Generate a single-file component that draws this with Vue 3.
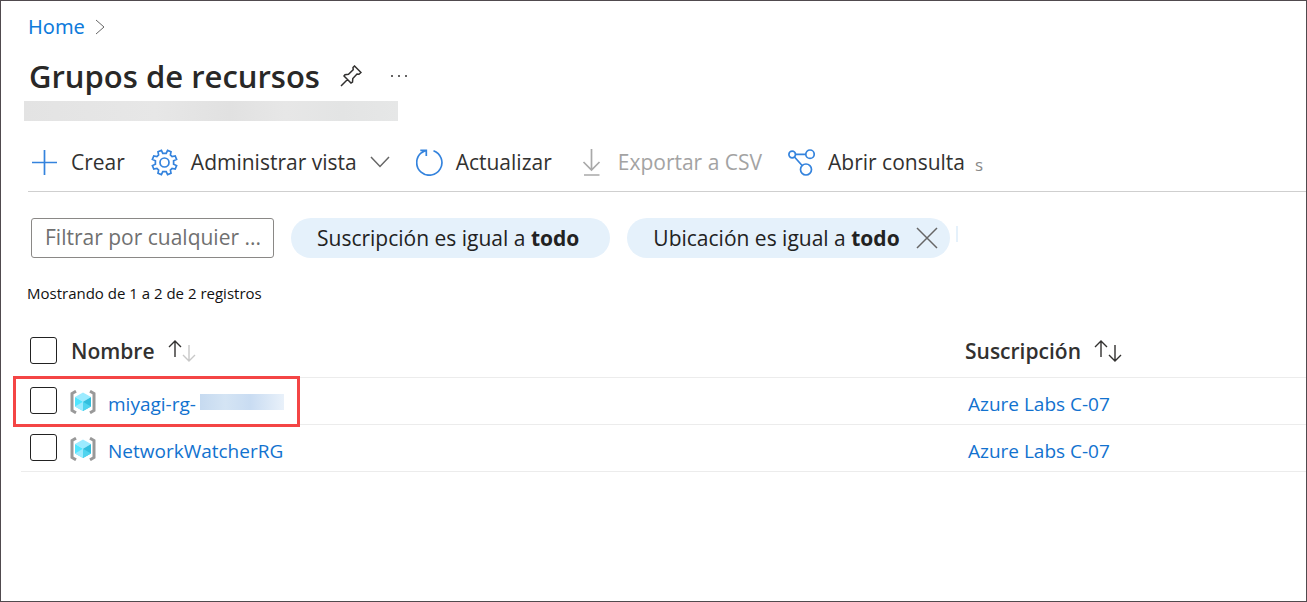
<script setup>
import { ref } from 'vue'

const filterText = ref('')
const allSelected = ref(false)
const rows = ref([
  { id: 'miyagi', name: 'miyagi-rg-', masked: true, subscription: 'Azure Labs C-07', selected: false },
  { id: 'watcher', name: 'NetworkWatcherRG', masked: false, subscription: 'Azure Labs C-07', selected: false },
])

function toggleAll() {
  rows.value.forEach((row) => { row.selected = allSelected.value })
}
</script>

<template>
  <main class="page">
    <nav class="breadcrumb" aria-label="Breadcrumb">
      <a href="#">Home</a>
      <svg class="crumb-arrow" viewBox="0 0 10 16" aria-hidden="true"><path d="M1 1l8 7-8 7" /></svg>
    </nav>

    <header class="title-row">
      <h1>Grupos de recursos</h1>
      <button class="plain" type="button" aria-label="Anclar">
        <svg class="pin" viewBox="0 0 22 22" aria-hidden="true">
          <path d="M1 21l6.500-6.500M4 11l7 7 1.500-1 .3-3.500 4.200-4.500 2 .3 2-1.800L14.500 1l-1.500 1.500.2 2.200L8.500 9.300 5 9.700z" />
        </svg>
      </button>
      <button class="plain" type="button" aria-label="Más opciones">
        <svg class="dots" viewBox="0 0 18 4" aria-hidden="true">
          <circle cx="2" cy="2" r="1" /><circle cx="9" cy="2" r="1" /><circle cx="16" cy="2" r="1" />
        </svg>
      </button>
    </header>
    <div class="masked-directory"></div>

    <div class="toolbar" role="toolbar">
      <button class="command" type="button">
        <svg class="icon" viewBox="0 0 27 27" aria-hidden="true"><path d="M13.500 1v25M1 13.500h25" /></svg>
        Crear
      </button>
      <button class="command" type="button">
        <svg class="icon" viewBox="0 0 27 27" aria-hidden="true">
          <path d="M11.800 4.400L10.400 1.400 7 2.800 7.600 5.900 5.900 7.600 2.800 7 1.400 10.400 4.400 11.800V15.200L1.400 16.600 2.800 20 5.900 19.400 7.600 21.100 7 24.200 10.400 25.600 11.800 22.600H15.200L16.600 25.600 20 24.200 19.400 21.100 21.100 19.400 24.200 20 25.600 16.600 22.600 15.200V11.800L25.600 10.400 24.200 7 21.100 7.600 19.400 5.900 20 2.800 16.600 1.400 15.200 4.400z" />
          <circle cx="13.500" cy="13.500" r="4.500" />
        </svg>
        Administrar vista
        <svg class="chevron" viewBox="0 0 20 12" aria-hidden="true"><path d="M1 1l9 9.500L19 1" /></svg>
      </button>
      <button class="command" type="button">
        <svg class="icon" viewBox="0 0 27 27" aria-hidden="true">
          <path d="M17.500 1.700a12.600 12.600 0 1 1-12 2l4.500-2.400M4.300 1.300h6v5.800" />
        </svg>
        Actualizar
      </button>
      <button class="command" type="button" disabled>
        <svg class="icon" viewBox="0 0 27 27" aria-hidden="true">
          <path d="M13.500 0v20M5.500 13l8 8 8-8M6 26h15.500" />
        </svg>
        Exportar a CSV
      </button>
      <button class="command" type="button">
        <svg class="icon" viewBox="0 0 27 27" aria-hidden="true">
          <circle cx="4.200" cy="5.500" r="3.300" /><circle cx="22" cy="5.200" r="4.200" /><circle cx="18" cy="20.500" r="5.500" />
          <path d="M7.500 5.400h10.300M6.500 8l7.600 8.500" />
        </svg>
        Abrir consulta
      </button>
      <span class="clipped-label">s</span>
    </div>

    <div class="filters">
      <input v-model="filterText" class="search" type="text" placeholder="Filtrar por cualquier ..." aria-label="Filtrar por cualquier campo">
      <button class="pill" type="button"><span>Suscripción es igual a <strong>todo</strong></span></button>
      <div class="pill closable">
        <span>Ubicación es igual a <strong>todo</strong></span>
        <button class="plain" type="button" aria-label="Quitar filtro">
          <svg class="close" viewBox="0 0 22 22" aria-hidden="true"><path d="M1 1l20 20M21 1L1 21" /></svg>
        </button>
      </div>
      <span class="pill-edge"></span>
    </div>

    <p class="count">Mostrando de 1 a 2 de 2 registros</p>

    <div class="grid">
      <table class="groups">
        <thead>
          <tr>
            <th class="check"><input v-model="allSelected" type="checkbox" aria-label="Seleccionar todo" @change="toggleAll"></th>
            <th class="name">
              <span class="heading">Nombre
                <svg class="sort" viewBox="0 0 28 22" aria-hidden="true">
                  <path d="M7 17V1M1 7l6-6 6 6" /><path class="faint" d="M21 5v16M15 15l6 6 6-6" />
                </svg>
              </span>
            </th>
            <th>
              <span class="heading">Suscripción
                <svg class="sort" viewBox="0 0 28 22" aria-hidden="true">
                  <path d="M7 17V1M1 7l6-6 6 6" /><path d="M21 5v16M15 15l6 6 6-6" />
                </svg>
              </span>
            </th>
          </tr>
        </thead>
        <tbody>
          <tr v-for="row in rows" :key="row.id">
            <td class="check" :class="{ marked: row.masked }">
              <input v-model="row.selected" type="checkbox" :aria-label="'Seleccionar ' + row.name">
            </td>
            <td>
              <span class="resource">
                <svg class="group-icon" viewBox="0 0 26 24" aria-hidden="true">
                  <path class="bracket" d="M6 1.200L2 3.500v17l4 2.300M20 1.200l4 2.300v17l-4 2.300" />
                  <path fill="#9cebff" d="M13 2.500l8 4.600-8 4.600-8-4.600z" />
                  <path fill="#50e6ff" d="M5 7.100l8 4.600V21l-8-4.600z" />
                  <path fill="#32bedd" d="M21 7.100l-8 4.600V21l8-4.600z" />
                  <path fill="#9cebff" d="M5 16.400l8-4.700V21z" />
                  <path fill="#50d4ef" d="M21 16.400l-8-4.700V21z" />
                </svg>
                <a href="#">{{ row.name }}</a><span v-if="row.masked" class="masked-name"></span>
              </span>
            </td>
            <td class="subscription"><a href="#">{{ row.subscription }}</a></td>
          </tr>
        </tbody>
      </table>
    </div>
  </main>
</template>

<style>
body { margin: 0; background: #fff; }
</style>

<style scoped>
.page {
  box-sizing: border-box;
  min-height: 100vh;
  border: 1px solid #504a4e;
  padding-top: 12px;
  background: #fff;
  color: #323130;
  font-family: "Open Sans", "Noto Sans", sans-serif;
  font-size: 21px;
  line-height: 28px;
}
button, input { font: inherit; color: inherit; margin: 0; }
button { border: 0; padding: 0; background: none; cursor: pointer; }
svg { display: block; flex: none; fill: none; stroke: currentColor; stroke-width: 1.500; }
a { color: #1272cf; text-decoration: none; }

.breadcrumb { display: flex; align-items: center; gap: 10px; padding-left: 27px; font-family: "Noto Sans", sans-serif; font-size: 20px; }
.breadcrumb a { color: #0f7bdb; }
.crumb-arrow { width: 10px; height: 16px; color: #666; stroke-width: 1; }

.title-row { display: flex; align-items: center; gap: 20px; padding-left: 28px; margin-top: 15px; }
h1 { margin: 0; font-size: 31px; line-height: 40px; font-weight: 600; color: #292827; }
.pin { width: 22px; height: 22px; stroke-width: 1.500; }
.dots { width: 18px; height: 4px; margin-left: 8px; fill: currentColor; stroke: none; }
.masked-directory {
  width: 374px;
  height: 20px;
  margin: 5px 0 0 23px;
  background: linear-gradient(90deg, #e3e3e3, #e7e7e7 35%, #e1e1e1 55%, #e7e7e7 70%, #e3e4e4 85%, #e6e7e7);
}

.toolbar {
  display: flex;
  align-items: center;
  gap: 26px;
  height: 58px;
  margin: 12px 0 0 27px;
  padding-left: 3px;
  border-bottom: 1px solid #cfcfcf;
}
.command { display: flex; align-items: center; gap: 13px; white-space: nowrap; }
.command:disabled { color: #a3a3a3; cursor: default; }
.icon { width: 27px; height: 27px; color: #3483dd; stroke-width: 1.700; }
.command:disabled .icon { color: #a9a9a9; }
.chevron { width: 20px; height: 12px; color: #666; }
.clipped-label { margin-left: -16px; padding-top: 6px; font-size: 17px; line-height: 22px; color: #888; }

.filters { display: flex; align-items: center; gap: 17px; margin: 26px 0 0 30px; }
.search {
  box-sizing: border-box;
  width: 243px;
  height: 40px;
  border: 1px solid #8a8886;
  border-radius: 3px;
  padding: 0 13px 2px;
  background: #fff;
}
.search::placeholder { color: #707070; opacity: 1; }
.pill {
  display: flex;
  align-items: center;
  justify-content: center;
  height: 40px;
  padding: 0 31px 0 26px;
  border-radius: 20px;
  background: #e5f1fb;
  color: #222;
  white-space: nowrap;
}
.closable { gap: 16px; padding-right: 12px; }
.close { width: 22px; height: 22px; color: #666; }
.pill-edge { width: 2px; height: 16px; margin: -8px 0 0 -11px; background: #e5f1fb; }

.count { margin: 24px 0 0 26px; color: #111; font-size: 15px; line-height: 22px; }

.grid { margin: 21px 0 0 20px; }
.groups { width: 100%; border-collapse: collapse; table-layout: fixed; }
th, td { height: 46px; padding: 0; text-align: left; border-bottom: 1px solid #ececec; }
th { height: 52px; font-weight: 600; }
td { font-size: 19px; }
.check { width: 50px; }
.name { width: 894px; }
.check input {
  appearance: none;
  display: block;
  box-sizing: border-box;
  width: 27px;
  height: 27px;
  margin: 0 0 2px 9px;
  border: 1px solid #222;
  border-radius: 3px;
  background: #fff;
}
.check input:checked { background: #1272cf; }
.heading, .resource { display: flex; align-items: center; }
.heading { gap: 13px; }
.sort { width: 28px; height: 22px; stroke-width: 1.400; }
.faint { stroke: #c8c8c8; }
.resource { padding-top: 2px; }
.group-icon { width: 26px; height: 24px; margin: 0 12px 0 -1px; stroke: none; }
.group-icon .bracket { stroke: #999; stroke-width: 3; }
.resource a { padding-top: 4px; }
.subscription { padding: 6px 0 0 3px; height: 40px; }
.masked-name { width: 84px; height: 16px; margin-left: 4px; background: linear-gradient(90deg, #c6daf0, #d4e4f4 30%, #c9dcf2 60%, #e9f1fa); }
.marked { position: relative; }
.marked::after {
  content: "";
  position: absolute;
  left: -8px;
  top: -2px;
  box-sizing: border-box;
  width: 287px;
  height: 51px;
  border: 3px solid #f44545;
  pointer-events: none;
}
</style>
